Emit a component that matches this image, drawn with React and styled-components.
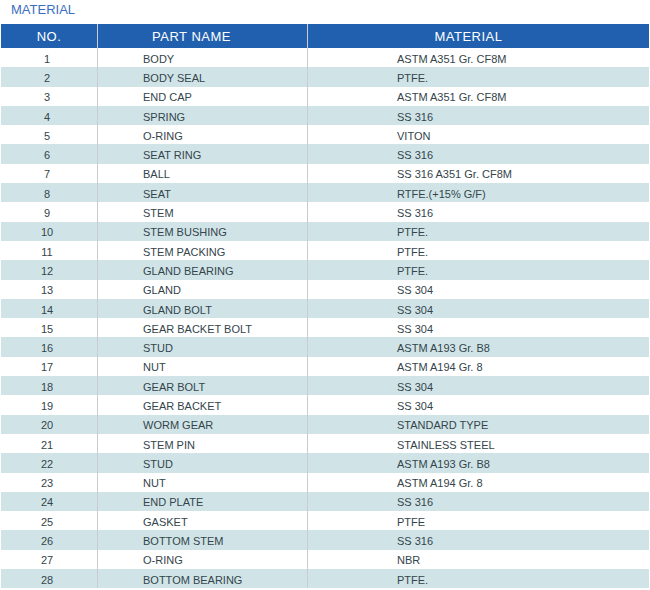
import React from "react";
import styled, { createGlobalStyle } from "styled-components";

const parts = [
  ["BODY", "ASTM A351 Gr. CF8M"],
  ["BODY SEAL", "PTFE."],
  ["END CAP", "ASTM A351 Gr. CF8M"],
  ["SPRING", "SS 316"],
  ["O-RING", "VITON"],
  ["SEAT RING", "SS 316"],
  ["BALL", "SS 316 A351 Gr. CF8M"],
  ["SEAT", "RTFE.(+15% G/F)"],
  ["STEM", "SS 316"],
  ["STEM BUSHING", "PTFE."],
  ["STEM PACKING", "PTFE."],
  ["GLAND BEARING", "PTFE."],
  ["GLAND", "SS 304"],
  ["GLAND BOLT", "SS 304"],
  ["GEAR BACKET BOLT", "SS 304"],
  ["STUD", "ASTM A193 Gr. B8"],
  ["NUT", "ASTM A194 Gr. 8"],
  ["GEAR BOLT", "SS 304"],
  ["GEAR BACKET", "SS 304"],
  ["WORM GEAR", "STANDARD TYPE"],
  ["STEM PIN", "STAINLESS STEEL"],
  ["STUD", "ASTM A193 Gr. B8"],
  ["NUT", "ASTM A194 Gr. 8"],
  ["END PLATE", "SS 316"],
  ["GASKET", "PTFE"],
  ["BOTTOM STEM", "SS 316"],
  ["O-RING", "NBR"],
  ["BOTTOM BEARING", "PTFE."],
];

const GlobalStyle = createGlobalStyle`
  body {
    margin: 0;
    background: #fff;
    font-family: "Liberation Sans", Arial, sans-serif;
  }
`;

const Page = styled.div`
  width: 650px;
`;

const Title = styled.h2`
  margin: 0;
  height: 24px;
  padding: 2px 0 0 11px;
  box-sizing: border-box;
  font-size: 13px;
  font-weight: normal;
  line-height: 16px;
  color: #3a6fbf;
`;

const Table = styled.div`
  margin-left: 1px;
  width: 648px;
`;

const Row = styled.div`
  display: grid;
  grid-template-columns: 96px 210px 1fr;
  height: ${(p) => (p.$head ? "24px" : "19.3px")};
  background: ${(p) => (p.$head ? "#2160ae" : p.$shaded ? "#d0e4e8" : "#fff")};
  color: ${(p) => (p.$head ? "#fff" : "#34444a")};
  font-size: ${(p) => (p.$head ? "13px" : "11px")};
  letter-spacing: ${(p) => (p.$head ? "0.5px" : "0")};
`;

const Cell = styled.div`
  display: flex;
  align-items: center;
  justify-content: ${(p) => (p.$center ? "center" : "flex-start")};
  padding: ${(p) => (p.$head ? 0 : 2)}px ${(p) => p.$padRight || 0}px 0
    ${(p) => p.$pad || 0}px;
  border-left: ${(p) => (p.$divider ? "1px solid #c9cdd1" : "none")};
  white-space: nowrap;
  overflow: hidden;
`;

const App = () => {
  return (
    <Page>
      <GlobalStyle />
      <Title>MATERIAL</Title>
      <Table>
        <Row $head>
          <Cell $center $head>NO.</Cell>
          <Cell $center $head $divider $padRight={22}>
            PART NAME
          </Cell>
          <Cell $center $head $divider $padRight={20}>
            MATERIAL
          </Cell>
        </Row>
        {parts.map(([name, material], i) => (
          <Row key={i} $shaded={i % 2 === 1}>
            <Cell $center $padRight={4}>
              {i + 1}
            </Cell>
            <Cell $divider $pad={45}>
              {name}
            </Cell>
            <Cell $divider $pad={89}>
              {material}
            </Cell>
          </Row>
        ))}
      </Table>
    </Page>
  );
};

export default App;
